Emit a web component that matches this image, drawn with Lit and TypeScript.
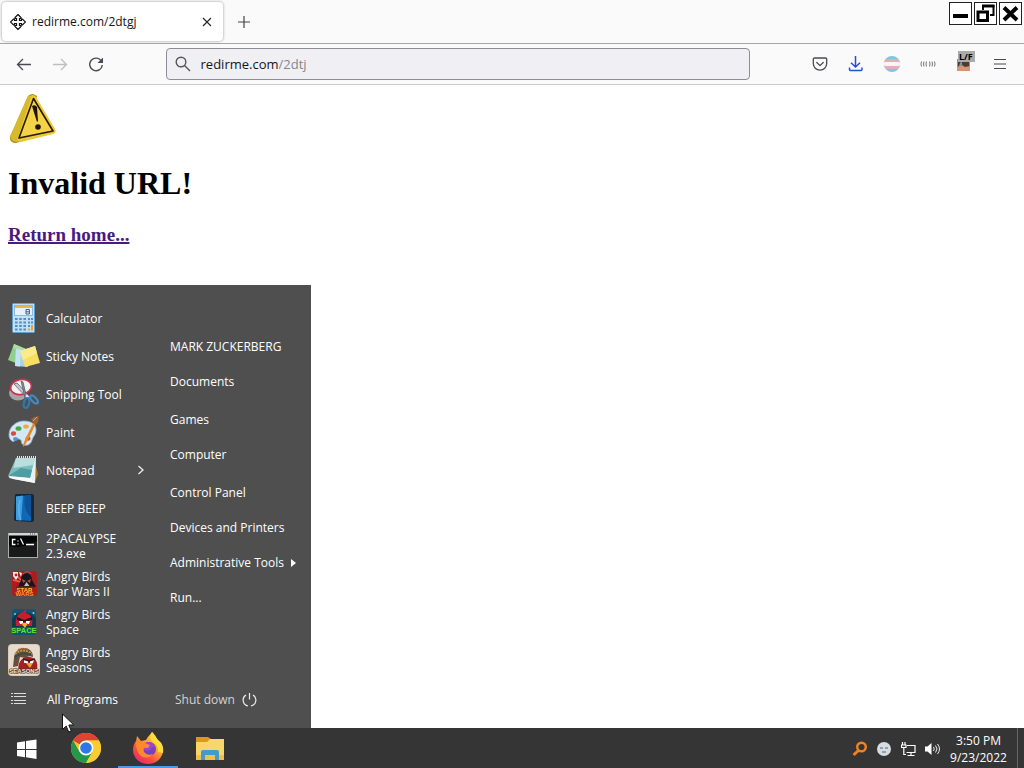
import { LitElement, html, css, svg, nothing } from "lit";
import { customElement } from "lit/decorators.js";

const calculator = svg`<svg viewBox="0 0 32 32" class="app-icon" aria-hidden="true">
  <rect x="4.500" y="1.500" width="22" height="29" rx="1" fill="#bfe0f5" stroke="#5f9fd0"/>
  <rect x="6.500" y="3.500" width="18" height="10" fill="#e6f2fb" stroke="#7db0d8" stroke-width=".8"/>
  <rect x="7" y="4" width="17" height="2" fill="#f0b24a"/>
  <path d="M18 7.500h3.400v4.500H18zM18 9.800h3.400" fill="none" stroke="#3d6288" stroke-width="1"/>
  <path d="M7 17h12M7 20.500h12M7 24h12M7 27.500h12" stroke="#4f8fc4" stroke-width="2" stroke-dasharray="2.600 1.600"/>
  <path d="M20 17h5M20 20.500h5M20 24h2" stroke="#4f8fc4" stroke-width="2" stroke-dasharray="2 1"/>
  <path d="M20 27.500h2M24 23v5.500" stroke="#f0a040" stroke-width="2"/></svg>`;

const notes = svg`<svg viewBox="0 0 32 32" class="app-icon" aria-hidden="true">
  <path d="M6 4l12 5-5 16L0 20z" fill="#8fd08c"/><path d="M6 4l12 5-1 4L5 8z" fill="#a8e0a0"/>
  <path d="M8 9l13 1-1 17-13-1z" fill="#a9d2ee"/><path d="M8 9l5 .5-1 17-5-.5z" fill="#c3e2f6"/>
  <path d="M12 11l15-5 5 17-15 4z" fill="#f7df62"/><path d="M12 11l15-5 2 7-14 7z" fill="#fceb8a"/></svg>`;

const snipping = svg`<svg viewBox="0 0 32 32" class="app-icon" aria-hidden="true">
  <ellipse cx="10" cy="15" rx="9" ry="7.500" fill="#a7a3a6"/>
  <ellipse cx="13" cy="9" rx="10.500" ry="7.500" transform="rotate(-10 13 9)" fill="#f4f1f2" stroke="#c8324c" stroke-width="1.600"/>
  <path d="M6 6l3-1 13 14-2 2z" fill="#c6ccd2" stroke="#555f69" stroke-width=".8"/>
  <path d="M13 3l2 1 4 17-2-1z" fill="#8c969f" stroke="#444e58" stroke-width=".7"/>
  <ellipse cx="18.500" cy="25" rx="2.600" ry="5" transform="rotate(14 18.500 25)" fill="none" stroke="#3178ae" stroke-width="2.200"/>
  <ellipse cx="26" cy="21.500" rx="2.400" ry="5" transform="rotate(-42 26 21.500)" fill="none" stroke="#3f8bc2" stroke-width="2.200"/>
  <circle cx="19" cy="18" r="1.300" fill="#d6e6f1"/></svg>`;

const paint = svg`<svg viewBox="0 0 32 32" class="app-icon" aria-hidden="true">
  <path d="M1 19C1 10 9 5 16 5c7 0 12 3 12 9 0 5-3 6-4 10-1 4-4 6-8 5-4-1-1-5-5-6-4-1-4 4-7 2-2-1-3-4-3-6z" fill="#d4e7f5" stroke="#8fb6d2" stroke-width=".8"/>
  <ellipse cx="5.500" cy="17.500" rx="2.600" ry="2.300" fill="#d94a3c"/><ellipse cx="10.500" cy="12.500" rx="3" ry="2.300" fill="#4ba84a"/>
  <ellipse cx="18" cy="10.500" rx="2.800" ry="2" fill="#eda83a"/><ellipse cx="20" cy="22.500" rx="2.500" ry="2.300" fill="#cf4937"/>
  <ellipse cx="7.500" cy="23" rx="2.500" ry="2" fill="#5b8fd1"/>
  <path d="M15 31c0-3 2-8 11-25l2 1C22 20 18 29 15 31z" fill="#e28b2b"/><path d="M25 7l-2-4 3-2 5-1-1 6-2 3z" fill="#9b6037"/><path d="M25 5l4-4" stroke="#d1a377"/></svg>`;

const notepad = svg`<svg viewBox="0 0 32 32" class="app-icon" aria-hidden="true">
  <path d="M26 5l4 15-3 8-5-4z" fill="#b8732b"/><path d="M8 5l20-1-1 25L1 24z" fill="#e6f0f0"/>
  <path d="M8 4h19l-5 20L0 22z" fill="#79bdbd"/><path d="M8 4h19l-1.500 7-20 3z" fill="#b9dedc"/>
  <path d="M0 22l22 2 2-8-11-2z" fill="#4f9da2"/><path d="M0 22l22 2 5 5L5 25z" fill="#f7fafa"/>
  <path d="M9 3h19" stroke="#dfe6e6" stroke-width="2" stroke-dasharray="1 1"/></svg>`;

const phone = svg`<svg viewBox="0 0 32 32" class="app-icon" aria-hidden="true">
  <path d="M7 3q0-1 2-1h14q3 0 3 2v24q0 2-2 2l-16-1q-2 0-2-2z" fill="#14263a"/><path d="M8 4.500l15-1.500v26L8 28z" fill="#1167b5"/>
  <path d="M8 4.500l7-1-2 25-5-.5z" fill="#3d9de2"/><path d="M17 3.500c-2 12 2 18 6 22V3z" fill="#0d5297"/>
  <path d="M12 8c-2 8-2 14 1 20" fill="none" stroke="#72c2f3" stroke-width="1.500" opacity=".6"/></svg>`;

const consoleWindow = svg`<svg viewBox="0 0 32 32" class="app-icon" aria-hidden="true">
  <rect x=".5" y="3.500" width="29" height="24" fill="#050505" stroke="#a8adb0"/>
  <rect x="1" y="3" width="28" height="2.500" fill="#d3d6d8"/><path d="M22 4h6" stroke="#555" stroke-dasharray="1 1"/>
  <path d="M1 27V16c10 3 18-1 28-5v16z" fill="#1a1a1a"/>
  <path d="M7.500 9.500h-3v5h3M10 10.500v1M10 13.500v1M12.500 8.500l3 6M18 14.500h8" fill="none" stroke="#fff" stroke-width="1.300"/></svg>`;

const starWars = svg`<svg viewBox="0 0 32 32" class="app-icon" aria-hidden="true">
  <rect x="4" y="3" width="25" height="25" rx="3" fill="#a81e1c"/><path d="M5 4l10 10M5 12l8 2" stroke="#ee6251" stroke-width="1.500"/>
  <path d="M5 4h5v5L8 12l-3-4zM11 4l3 1-1 4z" fill="#eee"/><circle cx="8" cy="7" r="1.400" fill="#b22"/>
  <path d="M10 19l3-7c0-9 11-9 11 0l4 7z" fill="#16171d"/><path d="M14 11l4 2-3 2zM23 11l-4 2 3 2z" fill="#bd4a32"/>
  <path d="M16 18l2.500-4 3 4z" fill="#b9c0c8"/><path d="M15 6c3-3 6-3 8 0" fill="none" stroke="#747f90"/><path d="M8 20h18" stroke="#7a2020" stroke-width="3"/>
  <text x="16.500" y="23.500" text-anchor="middle" font-size="6" class="logo-type" fill="#ffc52b">STAR</text>
  <text x="16.500" y="28" text-anchor="middle" font-size="6" class="logo-type" fill="#ff982c">WARS</text></svg>`;

const space = svg`<svg viewBox="0 0 32 32" class="app-icon" aria-hidden="true">
  <rect x="4" y="3" width="24" height="26" rx="3" fill="#155371"/><path d="M4 13C9 5 20 3 28 12v9H4z" fill="#113853"/>
  <circle cx="7" cy="8" r="1" fill="#72cbe1"/><circle cx="25.500" cy="7" r="1" fill="#92d6e4"/>
  <path d="M8 20c-1-8 2-13 7-14l3-3v4c6 2 7 6 6 13z" fill="#c81e2c"/><path d="M9 11l7 3 8-3v3l-8 2-7-2z" fill="#26151c"/>
  <path d="M11 15h4v3h-3zM18 15h4l-1 3h-3z" fill="#fff"/><path d="M13 17h7l-3 5z" fill="#f4b32c"/>
  <text x="16" y="27" text-anchor="middle" font-size="7.500" class="logo-type" fill="#62e62b">SPACE</text></svg>`;

const seasons = svg`<svg viewBox="0 0 32 32" class="app-icon" aria-hidden="true">
  <rect width="32" height="32" rx="4" fill="#d8cbb8"/><rect x="1" y="1" width="30" height="30" rx="3" fill="#e5dccd"/>
  <path d="M11 28c-3-10 5-17 11-15 7 1 9 8 6 15z" fill="#a52025"/><path d="M6 14C7 1 25 1 25 13l-4-1-4 2-5-1-2 9-5 1z" fill="#65513a"/>
  <path d="M7 10q8-7 17 0" fill="none" stroke="#bd9a49" stroke-width="2" stroke-dasharray="2 1"/><path d="M7 13q8-6 17-2" fill="none" stroke="#2f4745" stroke-width="2" stroke-dasharray="2 1"/>
  <path d="M10 6q5-3 10 0" fill="none" stroke="#c95d3a" stroke-dasharray="2 1" stroke-width="1.500"/>
  <path d="M16 16h4v3h-4zM22 16h4l-1 3h-3z" fill="#fff"/><path d="M15 15l6 2 6-2" fill="none" stroke="#33171a" stroke-width="1.500"/><path d="M18 19h7l-3 5z" fill="#eda42c"/>
  <text x="16" y="29" text-anchor="middle" font-size="6" class="logo-type" fill="#f8ecd0" stroke="#4b3020" stroke-width="1.200" paint-order="stroke">SEASONS</text></svg>`;

const programs = [
  { name: "Calculator", icon: calculator },
  { name: "Sticky Notes", icon: notes },
  { name: "Snipping Tool", icon: snipping },
  { name: "Paint", icon: paint },
  { name: "Notepad", icon: notepad, more: true },
  { name: "BEEP BEEP", icon: phone },
  { name: "2PACALYPSE 2.3.exe", icon: consoleWindow },
  { name: "Angry Birds Star Wars II", icon: starWars },
  { name: "Angry Birds Space", icon: space },
  { name: "Angry Birds Seasons", icon: seasons },
];

const places = [
  ["MARK ZUCKERBERG", "Documents"],
  ["Games", "Computer"],
  ["Control Panel", "Devices and Printers", "Administrative Tools", "Run..."],
];

@customElement("browser-window")
export class BrowserWindow extends LitElement {
  static styles = css`
    :host { display: flex; flex-direction: column; background: #fff; font-family: "Open Sans", "Noto Sans", sans-serif; color: #15141a; }
    * { box-sizing: border-box; }
    button { border: 0; padding: 0; background: none; color: inherit; font: inherit; display: grid; place-items: center; }
    svg { display: block; }
    .tabs { display: flex; height: 44px; background: #fafafa; border-bottom: 1px solid #a6a6a8; padding: 2px; }
    .tab { display: flex; align-items: center; width: 221px; height: 39px; padding: 0 8px; gap: 6px; background: #fff; border-radius: 4px; box-shadow: 0 0 3px rgba(0, 0, 0, .4); font-size: 12px; }
    .title { flex: 1; }
    .close { width: 16px; height: 24px; }
    .new { width: 42px; height: 40px; }
    .controls { display: flex; gap: 2px; margin-left: auto; }
    .controls button { width: 23px; height: 23px; border: 1px solid #222; background: #fff; }
    .toolbar { display: flex; align-items: center; height: 41px; padding: 0 6px; background: #fafafa; border-bottom: 1px solid #ccc; color: #4a4a50; }
    .toolbar button { width: 36px; height: 36px; }
    .space { flex: 1; }
    .address { flex: 11; min-width: 0; display: flex; align-items: center; height: 32px; padding: 0 8px; background: #f0f0f4; border: 1px solid #8d8d98; border-radius: 4px; font-size: 13px; color: #15141a; }
    .address svg { margin-right: 10px; }
    .address input { flex: 1; min-width: 0; border: 0; padding: 0; background: none; font: inherit; color: #85858c; outline: 0; }
    .ext { font: 700 9px "Open Sans", sans-serif; }
    .page { padding: 8px; font-family: "Liberation Serif", serif; color: #000; }
    h1 { font-size: 32px; line-height: 37px; margin: 22px 0; }
    h3 { font-size: 19px; line-height: 22px; margin: 0; }
    a { color: #4a1a80; text-decoration-thickness: 2px; }
  `;

  render() {
    return html`
      <div class="tabs">
        <div class="tab">
          <svg width="16" height="16" viewBox="0 0 16 16" fill="#fff" stroke="#111" stroke-width="1.200" aria-hidden="true">
            <path d="M8 .5l3 3v1H9.500v2h2V5h1l3 3-3 3h-1V9.500h-2v2H11v1l-3 3-3-3v-1h1.500v-2h-2V11h-1l-3-3 3-3h1v1.500h2v-2H5v-1z"/>
          </svg>
          <span class="title">redirme.com/2dtgj</span>
          <button class="close" aria-label="Close tab"><svg width="10" height="10" fill="none" stroke="#222" stroke-width="1.100"><path d="M1 1l8 8M9 1L1 9"/></svg></button>
        </div>
        <button class="new" aria-label="New tab"><svg width="12" height="12" stroke="#444" stroke-width="1.200"><path d="M0 6h12M6 0v12"/></svg></button>
        <div class="controls">
          <button aria-label="Minimize"><svg width="21" height="21"><path d="M3 11h15v4H3z"/></svg></button>
          <button aria-label="Restore"><svg width="21" height="21" fill="none" stroke="#000"><path d="M8 7V3M18.500 2v10H15" stroke-width="2"/><path d="M7 3h12.500" stroke-width="3"/><path d="M3 9h9.500v8.500H3z" stroke-width="3"/></svg></button>
          <button aria-label="Close"><svg width="21" height="21" fill="none" stroke="#000" stroke-width="4"><path d="M4 4.500l13 12.500M17 4.500L4 17"/></svg></button>
        </div>
      </div>
      <div class="toolbar">
        <button aria-label="Back"><svg width="16" height="16" fill="none" stroke="currentColor" stroke-width="1.300"><path d="M15 8.500H1.500M7 3L1.500 8.500 7 14"/></svg></button>
        <button aria-label="Forward" disabled><svg width="16" height="16" fill="none" stroke="#bebec2" stroke-width="1.300"><path d="M1 8.500h13.500M9 3L14.500 8.500 9 14"/></svg></button>
        <button aria-label="Reload"><svg width="16" height="16" fill="none" stroke="currentColor" stroke-width="1.400"><path d="M13.500 5.300A6.300 6.300 0 1 0 14.300 9"/><path d="M15 1.500V7H9.500z" fill="currentColor" stroke="none"/></svg></button>
        <span class="space"></span>
        <label class="address">
          <svg width="16" height="16" fill="none" stroke="#55555c" stroke-width="1.400" aria-hidden="true"><circle cx="6" cy="6" r="4.800"/><path d="M9.500 9.500l5.500 5.500"/></svg>
          <span>redirme.com</span><input aria-label="Address" value="/2dtj" />
        </label>
        <span class="space"></span>
        <button aria-label="Save to Pocket"><svg width="16" height="16" fill="none" stroke="currentColor" stroke-width="1.300" stroke-linecap="round" stroke-linejoin="round"><path d="M2.500 2h11c.7 0 1.200.5 1.200 1.200V7.500a6.700 6.700 0 0 1-13.400 0V3.200C1.300 2.500 1.800 2 2.500 2z"/><path d="M4.800 6.500L8 9.600l3.200-3.100"/></svg></button>
        <button aria-label="Downloads"><svg width="16" height="16" fill="none" stroke="#2352cf" stroke-width="1.500"><path d="M7.500 0v11M3 6.700L7.500 11 12 6.700M1.500 11.500v2c0 .6.400 1 1 1h10.500c.6 0 1-.4 1-1v-2"/></svg></button>
        <button aria-label="Flag extension"><svg width="16" height="16"><clipPath id="disc"><circle cx="8" cy="8" r="8"/></clipPath><g clip-path="url(#disc)"><path fill="#76c9e0" d="M0 0h16v16H0z"/><path fill="#e5adba" d="M0 3h16v10H0z"/><path fill="#f8f5f6" d="M0 6h16v4H0z"/></g></svg></button>
        <button aria-label="Sound extension"><svg width="16" height="8" fill="none" stroke="#666" stroke-width=".9"><path d="M1.500 1.500q-1 2.500 0 5M4 1.500q-1 2.500 0 5M6.500 1.500q-1 2.500 0 5M9.500 1.500q1 2.500 0 5M12 1.500q1 2.500 0 5M14.500 1.500q1 2.500 0 5"/></svg></button>
        <button aria-label="L/F extension"><svg width="24" height="26" viewBox="-5 0 24 26"><path fill="#b98468" d="M0 8h13v12H0z"/><path fill="#4a3c38" d="M1 9h11v7H1z"/><path fill="#db9471" d="M0 16l5-2 3 2 5-1v5H0z"/><path fill="#7898a3" d="M3 12l2-2v5H2z"/><path fill="#aaa" d="M1 0h17v11H1z"/><text x="2" y="9" class="ext" fill="#000">L/F</text></svg></button>
        <button aria-label="Application menu"><svg width="12" height="12" stroke="currentColor" stroke-width="1.200"><path d="M0 1.500h12M0 6h12M0 10.500h12"/></svg></button>
      </div>
      <main class="page">
        <svg width="50" height="50" viewBox="0 0 50 50" role="img" aria-label="Warning">
          <path d="M20 3Q22 1 25 1l4 2-14 45-7 2q-5 0-6-4-1-2 1-4z" fill="#a88a14"/>
          <path d="M20 3l5-1-12 40-3 7q-6 0-7-3-2-2 0-5z" fill="#d6ba2a"/>
          <path d="M23 4q2-4 5 0l19 32q2 4-2 5l-32 8q-5 0-3-5z" fill="#e9c936"/>
          <path d="M25.500 5.500L45 38l-34 7z" fill="#f3d447" stroke="#2a1708" stroke-width="1.600" stroke-linejoin="round"/>
          <path d="M24 13q3-2 5 1l1 14-1 1z" fill="#201408"/><circle cx="30" cy="34" r="2.800" fill="#201408"/>
        </svg>
        <h1>Invalid URL!</h1>
        <h3><a href="#home">Return home...</a></h3>
      </main>`;
  }
}

@customElement("start-menu")
export class StartMenu extends LitElement {
  static styles = css`
    :host { display: flex; background: #4f4f4f; color: #fff; font: 12px/15px "Open Sans", "Noto Sans", sans-serif; }
    * { box-sizing: border-box; }
    ul { list-style: none; margin: 0; padding: 0; }
    svg { flex: none; }
    button { display: flex; align-items: center; width: 100%; border: 0; padding: 0; background: none; color: inherit; font: inherit; text-align: left; }
    .programs { flex: none; width: 155px; padding: 14px 0 9px; }
    .program { height: 38px; padding: 0 8px; gap: 6px; }
    .app-icon { width: 32px; height: 32px; }
    .name { flex: 1; max-width: 80px; }
    .more { margin-left: auto; margin-right: 2px; }
    .all { height: 40px; padding: 0 11px; gap: 21px; }
    .places { flex: 1; min-width: 0; display: flex; flex-direction: column; padding: 44px 14px 9px 15px; }
    .group { margin-bottom: 3px; }
    .place { height: 35px; gap: 7px; white-space: nowrap; }
    .shutdown { margin-top: auto; height: 40px; padding-left: 5px; gap: 7px; color: #d2d2d2; }
    .logo-type { font-family: "Liberation Sans", sans-serif; font-weight: 700; }
  `;

  render() {
    return html`
      <div class="programs">
        <ul>
          ${programs.map((p) => html`<li><button class="program">${p.icon}<span class="name">${p.name}</span>${p.more
            ? html`<svg class="more" width="8" height="10" fill="none" stroke="#eee" stroke-width="1.300"><path d="M1.500 1l4.500 4-4.500 4"/></svg>`
            : nothing}</button></li>`)}
        </ul>
        <button class="all">
          <svg width="15" height="14" fill="#ddd" aria-hidden="true"><path d="M0 1h2v1H0zM3 1h12v1H3zM0 4h2v1H0zM3 4h12v1H3zM0 8h2v1H0zM3 8h12v1H3zM0 11h2v1H0zM3 11h12v1H3z"/></svg>
          <span>All Programs</span>
        </button>
      </div>
      <div class="places">
        ${places.map((group) => html`<ul class="group">
          ${group.map((name) => html`<li><button class="place">${name}${name === "Administrative Tools"
            ? html`<svg width="5" height="8" fill="#fff"><path d="M0 0l5 4-5 4z"/></svg>` : nothing}</button></li>`)}
        </ul>`)}
        <button class="shutdown">Shut down
          <svg width="15" height="15" fill="none" stroke="#eee" stroke-width="1.200" aria-hidden="true"><path d="M4 3A6 6 0 0 0 6 14M9 14A6 6 0 0 0 11 3M7.500 1v6.500"/></svg>
        </button>
      </div>`;
  }
}

@customElement("task-bar")
export class TaskBar extends LitElement {
  static styles = css`
    :host { display: flex; height: 40px; background: #353535; color: #fff; font: 12px/17px "Open Sans", "Noto Sans", sans-serif; }
    * { box-sizing: border-box; }
    button { border: 0; padding: 0; background: none; color: inherit; font: inherit; display: grid; place-items: center; }
    .start { width: 54px; margin-right: 2px; padding-top: 2px; }
    .apps { display: flex; gap: 2px; }
    .app { width: 60px; }
    .active { box-shadow: inset 0 -2px #4a9ae8; }
    .tray { display: flex; margin-left: auto; }
    .tray button { width: 24px; padding-top: 2px; }
    .tray .clock { width: 73px; padding-right: 4px; white-space: nowrap; }
    .tray .desktop { width: 7px; border-left: 1px solid #666; }
  `;

  render() {
    return html`
      <button class="start" aria-label="Start"><svg width="20" height="20" fill="#fff"><path d="M0 3.500l8-1.200V10H0zM9 2.100L19.500.5V10H9zM0 11h8v7.200L0 17zM9 11h10.500v9L9 18.300z"/></svg></button>
      <div class="apps">
        <button class="app" aria-label="Chrome"><svg width="30" height="30" viewBox="0 0 30 30">
          <circle cx="15" cy="15" r="15" fill="#f5c52c"/><path d="M15 15L2 7.500A15 15 0 0 1 28 7.500H15z" fill="#dc4437"/>
          <path d="M2 7.500A15 15 0 0 0 15 30l6.500-11.300L15 15l-6.500 3.700z" fill="#24984a"/><path d="M15 7.500h13A15 15 0 0 1 15 30l6.500-11.300z" fill="#f8cd32"/>
          <circle cx="15" cy="15" r="7.400" fill="#fff"/><circle cx="15" cy="15" r="5.800" fill="#2d78e6"/></svg></button>
        <button class="app active" aria-label="Firefox"><svg width="32" height="32" viewBox="0 0 32 32">
          <defs><linearGradient id="fire" x1=".85" y1=".1" x2=".2" y2="1"><stop stop-color="#ffe43b"/><stop offset=".4" stop-color="#ff9a29"/><stop offset=".7" stop-color="#fa4b41"/><stop offset="1" stop-color="#e52676"/></linearGradient></defs>
          <path d="M20 0c4 4 4 6 7 9 3 2 4 6 4 9a15 14 0 0 1-30 0c0-4 1-6 3-9l1-5 4 5 5-1c2-4 4-5 6-8z" fill="url(#fire)"/>
          <path d="M20 0c-2 5-2 8 1 10 5 3 5 6 5 10l5 1c1-5-1-10-4-12-3-3-3-5-7-9z" fill="#ffdc43"/>
          <circle cx="17" cy="17" r="7" fill="#7540c4"/><path d="M10 13q8-7 14 3c-2-1-4-1-5 1-2 3-5 1-9 1l-4-4z" fill="#9846ce"/>
          <path d="M4 10q7-2 11 2l3 1-2 3q-6-1-4 4 3 4 9 2-5 6-12 2-5-4-5-14z" fill="#ff8a2c"/></svg></button>
        <button class="app" aria-label="File Explorer"><svg width="28" height="25" viewBox="0 0 28 25">
          <path d="M0 1h12l3 2-3 5H0z" fill="#d79b18"/><path d="M0 6h11l3-3h14v20H0z" fill="#f8d66c"/><path d="M0 19h28v5H0z" fill="#edc14c"/>
          <path d="M5 24v-8q0-2 2-2h14q2 0 2 2v8h-4v-5H9v5z" fill="#459acb"/></svg></button>
      </div>
      <div class="tray">
        <button aria-label="Search"><svg width="16" height="16" fill="none" stroke="#f58220"><circle cx="9.500" cy="6" r="4.300" stroke-width="2.400"/><path d="M6.500 9.500L1.500 14" stroke-width="3"/></svg></button>
        <button aria-label="Status"><svg width="14" height="14"><circle cx="7" cy="7" r="7" fill="#d5dde2"/><path d="M3 6h3M8 6h3M5 10h4" fill="none" stroke="#58636b" stroke-width="1.200"/></svg></button>
        <button aria-label="Network"><svg width="15" height="15" fill="none" stroke="#fff" stroke-width="1.200"><path d="M6 3.500h8v7H5.500M10 10.500v3M6.500 13.500h7M1.500 0v3M4 0v3M.5 3h4.500v2.500H.5zM2.800 5.500v7H5"/></svg></button>
        <button aria-label="Volume"><svg width="15" height="14" fill="none" stroke="#fff"><path d="M0 4.500h2.500L6.500 1v12L2.500 9.500H0z" fill="#fff" stroke="none"/><path d="M8.500 5q1.500 2 0 4M10.500 3.500q3 3.500 0 7M12.500 2q4 5 0 10" stroke-width=".9"/></svg></button>
        <button class="clock"><span>3:50 PM<br />9/23/2022</span></button>
        <button class="desktop" aria-label="Show desktop"></button>
      </div>`;
  }
}

@customElement("app-root")
export class AppRoot extends LitElement {
  static styles = css`
    :host { display: flex; flex-direction: column; min-height: 100vh; position: relative; }
    browser-window { flex: 1; }
    start-menu { position: absolute; left: 0; bottom: 40px; width: 311px; }
    .pointer { position: absolute; left: 62px; bottom: 35px; pointer-events: none; }
  `;

  render() {
    return html`
      <browser-window></browser-window>
      <task-bar></task-bar>
      <start-menu></start-menu>
      <svg class="pointer" width="13" height="20" aria-hidden="true"><path d="M.5 1v15.500l3.700-3.500 2.500 6 2.600-1-2.500-6h5z" fill="#fff" stroke="#111" stroke-width="1"/></svg>`;
  }
}
